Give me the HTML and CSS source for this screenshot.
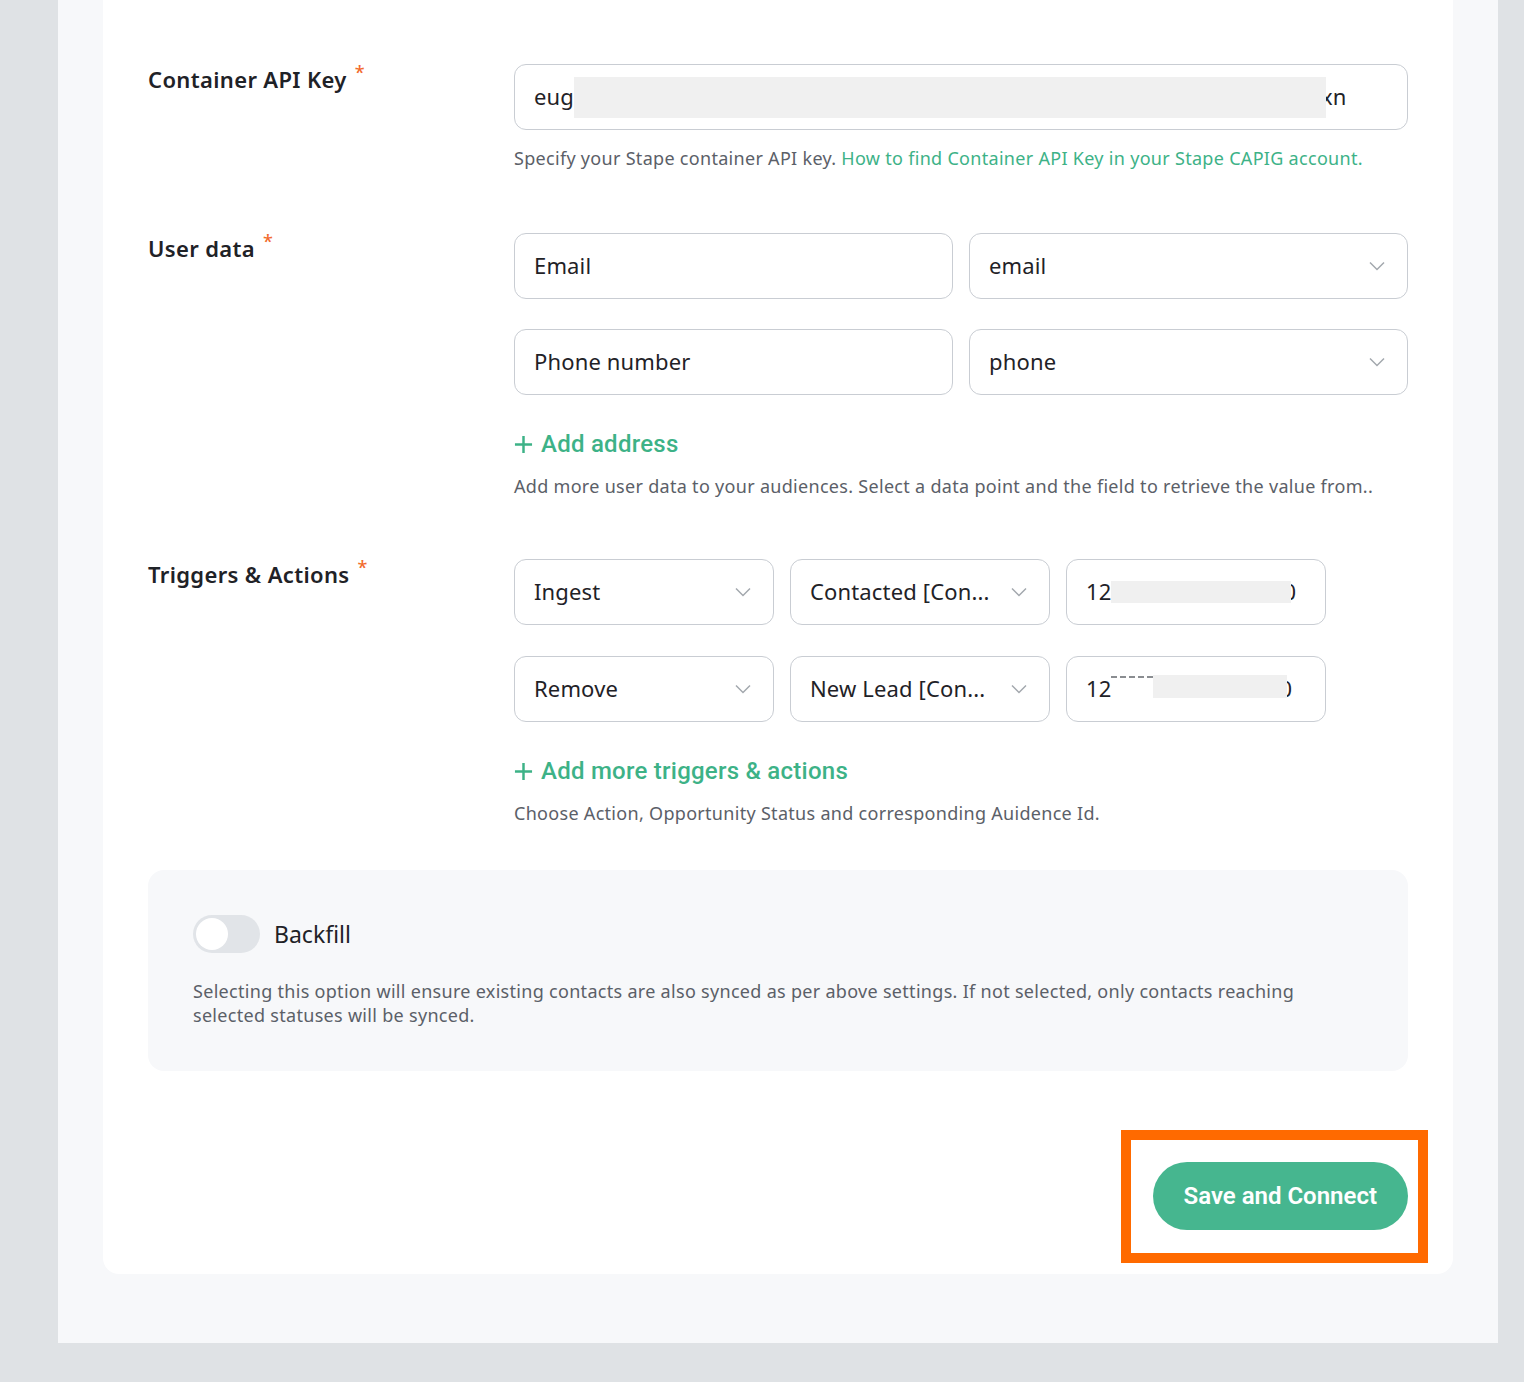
FILE: index.html
```html
<!DOCTYPE html>
<html lang="en">
<head>
<meta charset="utf-8">
<title>CAPIG audience sync settings</title>
<link rel="stylesheet" href="styles.css">
</head>
<body>
<div class="panel">
  <div class="card">
    <div class="section sec-key">
      <div class="label">Container API Key<span class="req">*</span></div>
      <div class="fields">
        <div class="input">
          <span>eug</span><span class="mask mask-key"></span><span>xn</span>
        </div>
        <p class="help">Specify your Stape container API key. <a class="link" href="#">How to find Container API Key in your Stape CAPIG account.</a></p>
      </div>
    </div>

    <div class="section sec-user">
      <div class="label">User data<span class="req">*</span></div>
      <div class="fields">
        <div class="grid-2">
          <div class="input">Email</div>
          <div class="input select">email
            <svg class="chev" viewBox="0 0 16 10"><path d="M1 1.5l7 7 7-7"/></svg>
          </div>
          <div class="input">Phone number</div>
          <div class="input select">phone
            <svg class="chev" viewBox="0 0 16 10"><path d="M1 1.5l7 7 7-7"/></svg>
          </div>
        </div>
        <a class="add" href="#"><svg class="plus" viewBox="0 0 20 20"><path d="M10 1v18M1 10h18"/></svg>Add address</a>
        <p class="help help-tight">Add more user data to your audiences. Select a data point and the field to retrieve the value from..</p>
      </div>
    </div>

    <div class="section sec-trig">
      <div class="label">Triggers &amp; Actions<span class="req">*</span></div>
      <div class="fields">
        <div class="grid-3">
          <div class="input select">Ingest
            <svg class="chev" viewBox="0 0 16 10"><path d="M1 1.5l7 7 7-7"/></svg>
          </div>
          <div class="input select">Contacted [Con...
            <svg class="chev" viewBox="0 0 16 10"><path d="M1 1.5l7 7 7-7"/></svg>
          </div>
          <div class="input">
            <span>12</span><span class="mask mask-id"></span><span>0</span>
          </div>
          <div class="input select">Remove
            <svg class="chev" viewBox="0 0 16 10"><path d="M1 1.5l7 7 7-7"/></svg>
          </div>
          <div class="input select">New Lead [Con...
            <svg class="chev" viewBox="0 0 16 10"><path d="M1 1.5l7 7 7-7"/></svg>
          </div>
          <div class="input">
            <span>12</span><span class="mask-dash"></span><span class="mask mask-id2"></span><span>0</span>
          </div>
        </div>
        <a class="add" href="#"><svg class="plus" viewBox="0 0 20 20"><path d="M10 1v18M1 10h18"/></svg>Add more triggers &amp; actions</a>
        <p class="help help-tight">Choose Action, Opportunity Status and corresponding Auidence Id.</p>
      </div>
    </div>

    <div class="backfill">
      <div class="toggle-row">
        <span class="toggle"><span class="knob"></span></span>
        <span class="toggle-label">Backfill</span>
      </div>
      <p class="help backfill-text">Selecting this option will ensure existing contacts are also synced as per above settings. If not selected, only contacts reaching selected statuses will be synced.</p>
    </div>

    <div class="footer">
      <div class="btn-wrap">
        <button class="btn" type="button">Save and Connect</button>
        <span class="highlight"></span>
      </div>
    </div>
  </div>
</div>
</body>
</html>
```

FILE: styles.css
```css
* { box-sizing: border-box; }

body {
  margin: 0;
  background: #dfe2e5;
  font-family: "Noto Sans", Roboto, Arial, sans-serif;
  color: #1f2227;
}

.panel {
  margin-left: 58px;
  width: 1440px;
  height: 1343px;
  background: #f7f8fa;
  padding: 0 45px;
}

.card {
  background: #fff;
  border-radius: 0 0 16px 16px;
  padding: 64px 45px 44px;
}

.section {
  display: grid;
  grid-template-columns: 366px 894px;
}

.sec-user { margin-top: 63px; }
.sec-trig { margin-top: 61px; }

.label {
  font-size: 22px;
  line-height: 30px;
  font-weight: 600;
  letter-spacing: 0.35px;
  color: #1f2227;
}

.req {
  color: #f26b2e;
  font-size: 18px;
  font-weight: 500;
  vertical-align: top;
  position: relative;
  top: -7px;
  margin-left: 8px;
}

.input {
  height: 66px;
  border: 1px solid #c9cdd3;
  border-radius: 12px;
  display: flex;
  align-items: center;
  padding: 0 22px 2px 19px;
  font-size: 22px;
  letter-spacing: 0.15px;
  color: #1f2227;
  background: #fff;
  white-space: nowrap;
  overflow: hidden;
}

.select { justify-content: space-between; }

.chev {
  width: 16px;
  height: 10px;
  flex: none;
  fill: none;
  stroke: #a3a8ae;
  stroke-width: 1.5;
  margin-top: 2px;
}

.mask {
  display: inline-block;
  background: #f0f0f0;
  position: relative;
  z-index: 1;
}

.mask-key {
  width: 752px;
  height: 41px;
  margin-top: 2px;
  margin-right: -5px;
}

.mask-id {
  width: 180px;
  height: 22px;
  margin-top: 2px;
  margin-right: -8px;
}

.mask-dash {
  display: inline-block;
  width: 42px;
  height: 20px;
  border-top: 2px dashed #8a8d91;
  margin-top: -4px;
}

.mask-id2 {
  width: 134px;
  height: 23px;
  margin-top: -4px;
  margin-right: -8px;
}

.help {
  margin: 16px 0 0;
  font-size: 18px;
  line-height: 24px;
  letter-spacing: 0.3px;
  color: #5b6068;
}

.help-tight { margin-top: 14px; }

.link {
  color: #3db287;
  text-decoration: none;
}

.grid-2 {
  display: grid;
  grid-template-columns: 1fr 1fr;
  column-gap: 16px;
  row-gap: 30px;
}

.grid-3 {
  display: grid;
  grid-template-columns: 260px 260px 260px;
  column-gap: 16px;
  row-gap: 31px;
}

.add {
  display: flex;
  align-items: center;
  gap: 8px;
  margin-top: 33px;
  height: 32px;
  font-family: Roboto, "Noto Sans", Arial, sans-serif;
  font-size: 24px;
  font-weight: 500;
  letter-spacing: 0.25px;
  color: #3db287;
  text-decoration: none;
}

.plus {
  width: 19px;
  height: 19px;
  fill: none;
  stroke: #3db287;
  stroke-width: 2.6;
}

.backfill {
  margin-top: 45px;
  background: #f7f8fa;
  border-radius: 16px;
  padding: 45px 45px 44px;
}

.toggle-row {
  display: flex;
  align-items: center;
  gap: 14px;
}

.toggle {
  width: 67px;
  height: 38px;
  border-radius: 19px;
  background: #e1e4e8;
  padding: 3px;
  display: flex;
}

.knob {
  width: 32px;
  height: 32px;
  border-radius: 50%;
  background: #fff;
}

.toggle-label {
  font-size: 23px;
  color: #1f2227;
}

.backfill-text {
  margin-top: 26px;
  max-width: 1110px;
}

.footer {
  display: flex;
  justify-content: flex-end;
  margin-top: 91px;
}

.btn-wrap { position: relative; }

.btn {
  height: 68px;
  padding: 0 31px;
  border: 0;
  border-radius: 34px;
  background: #46b68f;
  color: #fff;
  font-family: Roboto, "Noto Sans", Arial, sans-serif;
  font-size: 24px;
  font-weight: 600;
}

.highlight {
  position: absolute;
  top: -32px;
  bottom: -33px;
  left: -32px;
  right: -20px;
  border: 10px solid #ff6a00;
  pointer-events: none;
}
```
